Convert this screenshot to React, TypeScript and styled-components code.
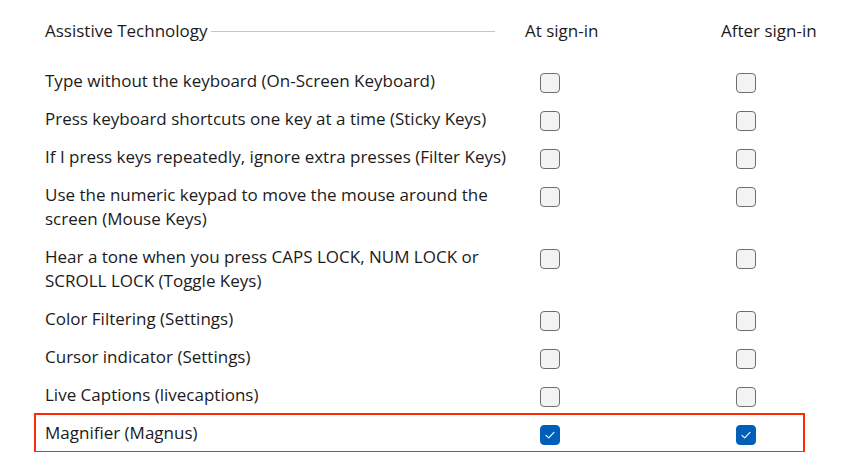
import React from 'react';
import styled, { createGlobalStyle } from 'styled-components';

const GlobalStyle = createGlobalStyle`
  body {
    margin: 0;
    background: #ffffff;
    font-family: 'Open Sans', 'Noto Sans', sans-serif;
    color: #1b1b1b;
  }
`;

const Page = styled.div`
  padding: 19px 0 0 45px;
  font-size: 17px;
  line-height: 24px;
`;

const Row = styled.div<{ highlight?: boolean }>`
  position: relative;
  display: grid;
  grid-template-columns: 480px 196px 1fr;
  padding: 7px 0;

  ${({ highlight }) =>
    highlight &&
    `
    &::after {
      content: '';
      position: absolute;
      left: -11px;
      top: -1px;
      width: 771px;
      bottom: -1px;
      border: 2.5px solid #ff2b06;
      box-sizing: border-box;
    }
  `}
`;

const HeaderRow = styled(Row)`
  padding: 0;
  margin-bottom: 19px;
`;

const HeaderTitle = styled.div`
  display: flex;
  align-items: center;
  padding-right: 30px;

  &::after {
    content: '';
    flex: 1;
    height: 1px;
    margin-left: 3px;
    background: #c6c6c6;
  }
`;

const ColumnTitle = styled.div`
  white-space: nowrap;
`;

const Label = styled.div`
  span {
    display: block;
    white-space: nowrap;
  }
`;

const Cell = styled.div`
  padding: 4px 0 0 15px;
`;

const Box = styled.div<{ checked?: boolean }>`
  width: 20px;
  height: 20px;
  box-sizing: border-box;
  border-radius: 4px;
  border: 1px solid ${({ checked }) => (checked ? '#005fb8' : '#6e6e6e')};
  background: ${({ checked }) => (checked ? '#005fb8' : '#f3f3f3')};
  display: flex;
  align-items: center;
  justify-content: center;
`;

const Check = () => (
  <svg width="12" height="12" viewBox="0 0 12 12" fill="none">
    <path d="M2 6.3 L4.7 8.8 L10 3.3" stroke="#ffffff" strokeWidth="1.1" strokeLinecap="round" strokeLinejoin="round" />
  </svg>
);

const Checkbox = ({ checked }: { checked?: boolean }) => (
  <Box checked={checked}>{checked && <Check />}</Box>
);

const items: { lines: string[]; checked?: boolean }[] = [
  { lines: ['Type without the keyboard (On-Screen Keyboard)'] },
  { lines: ['Press keyboard shortcuts one key at a time (Sticky Keys)'] },
  { lines: ['If I press keys repeatedly, ignore extra presses (Filter Keys)'] },
  { lines: ['Use the numeric keypad to move the mouse around the', 'screen (Mouse Keys)'] },
  { lines: ['Hear a tone when you press CAPS LOCK, NUM LOCK or', 'SCROLL LOCK (Toggle Keys)'] },
  { lines: ['Color Filtering (Settings)'] },
  { lines: ['Cursor indicator (Settings)'] },
  { lines: ['Live Captions (livecaptions)'] },
  { lines: ['Magnifier (Magnus)'], checked: true },
];

const App = () => (
  <>
    <GlobalStyle />
    <Page>
      <HeaderRow>
        <HeaderTitle>Assistive Technology</HeaderTitle>
        <ColumnTitle>At sign-in</ColumnTitle>
        <ColumnTitle>After sign-in</ColumnTitle>
      </HeaderRow>
      {items.map((item) => (
        <Row key={item.lines[0]} highlight={item.checked}>
          <Label>
            {item.lines.map((l) => (
              <span key={l}>{l}</span>
            ))}
          </Label>
          <Cell>
            <Checkbox checked={item.checked} />
          </Cell>
          <Cell>
            <Checkbox checked={item.checked} />
          </Cell>
        </Row>
      ))}
    </Page>
  </>
);

export default App;
